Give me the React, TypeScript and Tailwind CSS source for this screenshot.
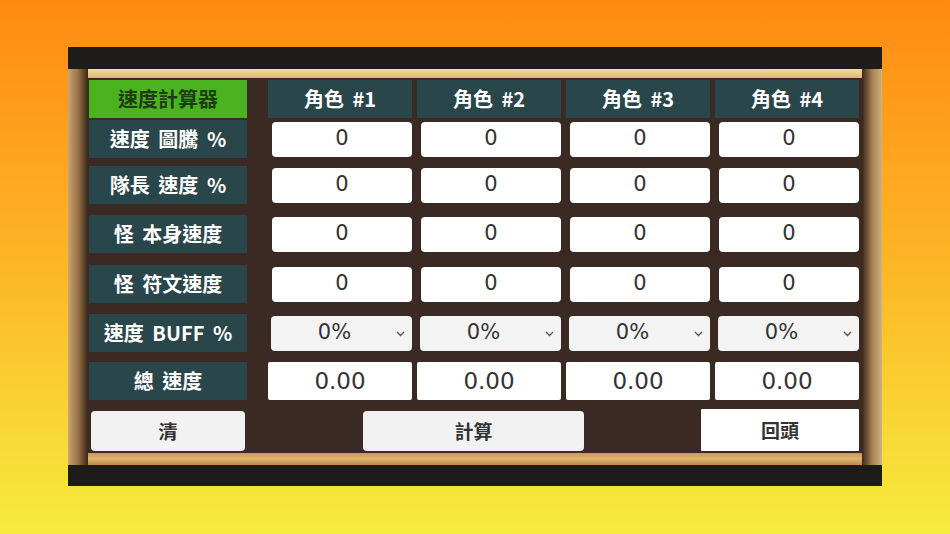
import React from 'react';

const cjk = { fontFamily: '"Noto Sans CJK TC", "Noto Sans CJK SC", sans-serif' };
const num = { fontFamily: '"DejaVu Sans", "Noto Sans CJK TC", sans-serif' };

const chars = ['角色 #1', '角色 #2', '角色 #3', '角色 #4'];

const Label = ({ text, green }: { text: string; green?: boolean }) => (
    <div
        style={cjk}
        className={`w-[158px] h-[38px] flex items-center justify-center text-[20px] font-bold whitespace-pre [word-spacing:4px] ${green ? 'bg-[#4bb31f] text-[#1e3b12]' : 'bg-[#29464b] text-white'}`}
    >
        {text}
    </div>
);

const Chevron = () => (
    <svg width="9" height="6" viewBox="0 0 9 6" className="absolute right-[7px] top-[15px]">
        <path d="M1 1 L4.5 4.5 L8 1" fill="none" stroke="#555" strokeWidth="1.3" />
    </svg>
);

const InputRow = ({ label }: { label: string }) => (
    <div className="flex items-center">
        <Label text={label} />
        <div className="flex gap-[5px] ml-[21px]">
            {[0, 1, 2, 3].map((i) => (
                <div key={i} className="w-[144px] flex justify-end">
                    <div style={num} className="w-[140px] h-[35px] bg-white rounded-[4px] flex items-center justify-center text-[21px] text-[#333]">
                        0
                    </div>
                </div>
            ))}
        </div>
    </div>
);

export default function App() {
    return (
        <div className="w-[950px] h-[534px] bg-gradient-to-b from-[#ff8a12] via-[#fcb626] to-[#f5ec3e] pt-[47px] pl-[68px] overflow-hidden">
            <div className="w-[814px] flex flex-col">
                <div className="h-[22px] bg-[#1d1c1b]"></div>

                <div className="h-[396px] flex">
                    {/* left wood */}
                    <div className="w-[20px] bg-gradient-to-r from-[#c9a672] via-[#9a7246] to-[#3a2718]"></div>

                    <div className="flex-1 flex flex-col">
                        <div className="h-[9px] bg-gradient-to-b from-[#f5dca6] to-[#dcb57a]"></div>

                        <div className="flex-1 bg-[#3a2a23] pl-[1px] pt-[2px] flex flex-col">
                            {/* header */}
                            <div className="flex items-center">
                                <Label text="速度計算器" green />
                                <div className="flex gap-[5px] ml-[21px]">
                                    {chars.map((c) => (
                                        <div key={c} style={cjk} className="w-[144px] h-[38px] bg-[#29464b] text-white font-bold text-[20px] [word-spacing:4px] flex items-center justify-center">
                                            {c}
                                        </div>
                                    ))}
                                </div>
                            </div>

                            <div className="mt-[2px]"><InputRow label="速度 圖騰 %" /></div>
                            <div className="mt-[8px]"><InputRow label="隊長 速度 %" /></div>
                            <div className="mt-[11px]"><InputRow label="怪 本身速度" /></div>
                            <div className="mt-[12px]"><InputRow label="怪 符文速度" /></div>

                            {/* buff */}
                            <div className="mt-[11px] flex items-center">
                                <Label text="速度 BUFF %" />
                                <div className="flex gap-[5px] ml-[21px]">
                                    {[0, 1, 2, 3].map((i) => (
                                        <div key={i} className="w-[144px] flex justify-end">
                                            <div style={num} className="relative w-[141px] h-[35px] bg-[#f3f3f3] rounded-[4px] flex items-center justify-center pr-[14px] text-[21px] text-[#333]">
                                                0%
                                                <Chevron />
                                            </div>
                                        </div>
                                    ))}
                                </div>
                            </div>

                            {/* total */}
                            <div className="mt-[10px] flex items-center">
                                <Label text="總 速度" />
                                <div className="flex gap-[5px] ml-[21px]">
                                    {[0, 1, 2, 3].map((i) => (
                                        <div key={i} style={num} className="w-[144px] h-[38px] bg-white rounded-[2px] flex items-center justify-center text-[23px] text-[#333]">
                                            0.00
                                        </div>
                                    ))}
                                </div>
                            </div>

                            {/* buttons */}
                            <div className="mt-[11px] flex items-center">
                                <button style={cjk} className="ml-[2px] w-[154px] h-[40px] bg-[#f2f2f2] rounded-[4px] text-[19px] font-bold text-[#333]">清</button>
                                <button style={cjk} className="ml-[118px] w-[221px] h-[40px] bg-[#f2f2f2] rounded-[4px] text-[19px] font-bold text-[#333]">計算</button>
                                <button style={cjk} className="ml-[117px] -mt-[2px] w-[158px] h-[42px] bg-white rounded-[1px] text-[19px] font-bold text-[#333]">回頭</button>
                            </div>
                        </div>

                        <div className="h-[12px] bg-gradient-to-b from-[#c89a5a] via-[#e0b470] to-[#b88a4e]"></div>
                    </div>

                    {/* right wood */}
                    <div className="w-[20px] bg-gradient-to-r from-[#3a2718] via-[#a68050] to-[#cdb283]"></div>
                </div>

                <div className="h-[21px] bg-[#1d1c1b]"></div>
            </div>
        </div>
    );
}
